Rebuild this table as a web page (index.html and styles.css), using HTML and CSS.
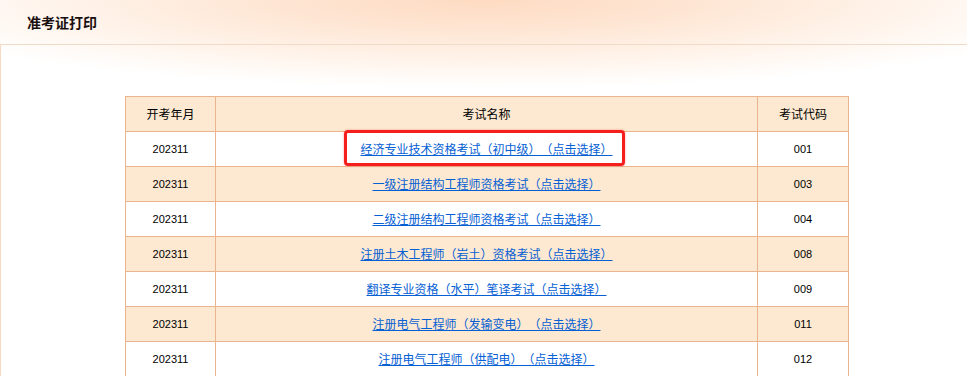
FILE: index.html
```html
<!DOCTYPE html>
<html lang="zh-CN">
<head>
<meta charset="utf-8">
<title>准考证打印</title>
<link rel="stylesheet" href="styles.css">
</head>
<body>
<div class="page">
  <div class="head"><h1 class="title">准考证打印</h1></div>
  <div class="panel">
    <table class="exams">
      <colgroup><col class="c1"><col class="c2"><col class="c3"></colgroup>
      <thead>
        <tr><th>开考年月</th><th>考试名称</th><th>考试代码</th></tr>
      </thead>
      <tbody>
        <tr><td class="num">202311</td><td><span class="mark"><a href="#">经济专业技术资格考试（初中级）（点击选择）</a></span></td><td class="num">001</td></tr>
        <tr><td class="num">202311</td><td><a href="#">一级注册结构工程师资格考试（点击选择）</a></td><td class="num">003</td></tr>
        <tr><td class="num">202311</td><td><a href="#">二级注册结构工程师资格考试（点击选择）</a></td><td class="num">004</td></tr>
        <tr><td class="num">202311</td><td><a href="#">注册土木工程师（岩土）资格考试（点击选择）</a></td><td class="num">008</td></tr>
        <tr><td class="num">202311</td><td><a href="#">翻译专业资格（水平）笔译考试（点击选择）</a></td><td class="num">009</td></tr>
        <tr><td class="num">202311</td><td><a href="#">注册电气工程师（发输变电）（点击选择）</a></td><td class="num">011</td></tr>
        <tr><td class="num">202311</td><td><a href="#">注册电气工程师（供配电）（点击选择）</a></td><td class="num">012</td></tr>
      </tbody>
    </table>
  </div>
</div>
</body>
</html>
```
FILE: styles.css
```css
html, body {
  margin: 0;
  padding: 0;
  background: #fff;
}
body {
  font-family: "Noto Sans CJK SC", "Liberation Sans", sans-serif;
  font-size: 12px;
  color: #000;
  overflow: hidden;
  text-spacing-trim: space-all;
}
.page {
  min-height: 376px;
  background:
    radial-gradient(ellipse 620px 88px at 50% 0, #fedbc2 0%, #fee6d4 35%, #fff2e8 65%, rgba(255,255,255,0) 100%),
    #fff;
}
.head {
  height: 44px;
  border-bottom: 1px solid #f0dbc8;
  display: flex;
  align-items: center;
}
.title {
  margin: 0 0 0 27px;
  font-size: 14px;
  font-weight: bold;
  color: #1a1010;
  line-height: 16px;
}
.panel {
  border-left: 1px solid #f6dac4;
  padding-top: 51px;
  min-height: 300px;
}
.exams {
  margin-left: 124px;
  width: 723px;
  border-collapse: collapse;
  table-layout: fixed;
}
.c1 { width: 90px; }
.c2 { width: 542px; }
.c3 { width: 91px; }
.exams th,
.exams td {
  border: 1px solid #e9b48e;
  height: 34px;
  padding: 0;
  text-align: center;
  vertical-align: middle;
  font-weight: normal;
  line-height: 16px;
}
.exams thead tr,
.exams tbody tr:nth-child(even) {
  background: #fde9d1;
}
.exams tbody tr:nth-child(odd) {
  background: #fff;
}
.num {
  font-family: "Liberation Sans", sans-serif;
  font-size: 11px;
}
.exams a {
  color: #0560d4;
  text-decoration: underline;
}
.mark {
  position: relative;
  display: inline-block;
}
.mark::after {
  content: "";
  position: absolute;
  left: -16px;
  right: -12px;
  top: -11px;
  bottom: -9px;
  border: 3px solid #f5201e;
  border-radius: 4px;
  box-shadow: 0 0 2px rgba(245, 32, 30, 0.5);
  pointer-events: none;
}
```
